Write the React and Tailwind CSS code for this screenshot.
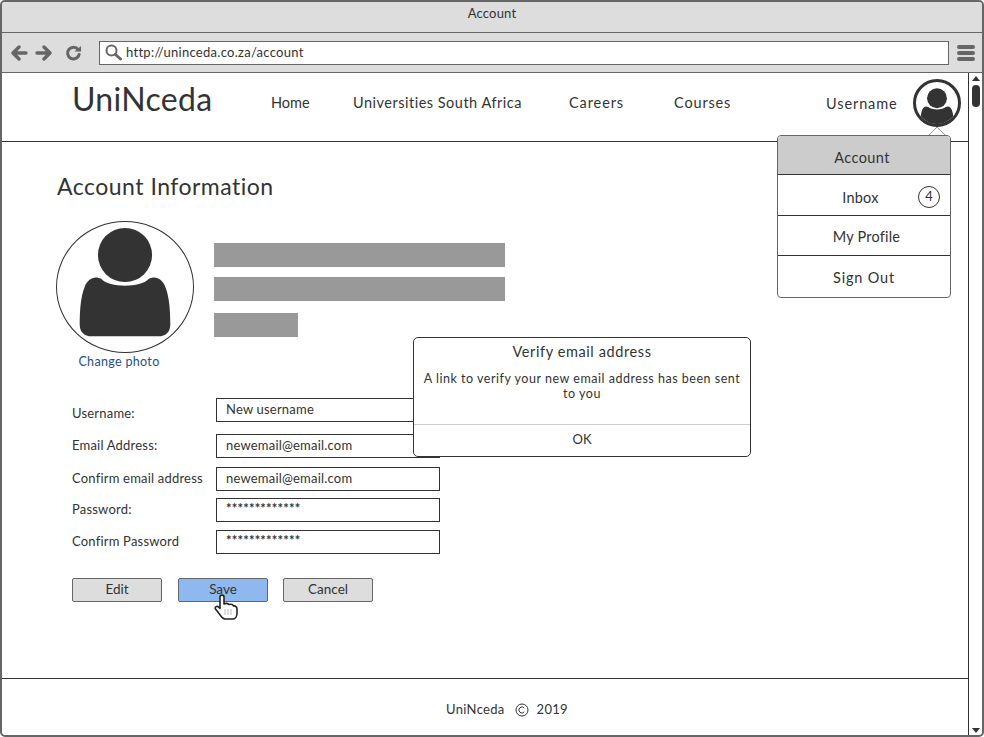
function Person({ className }) {
  return (
    <svg viewBox="0 0 138 132" className={className}>
      <circle cx="69" cy="33.5" r="27.5" fill="#333" />
      <path d="M45 58 C53 67 85 67 93 58 C100 54 107 58 110 66 C114 76 115 90 115 104 C115 112 110 116 103 116 L35 116 C28 116 23 112 23 104 C23 90 24 76 28 66 C31 58 38 54 45 58 Z" fill="#333" />
    </svg>
  );
}
function Field({ label, value, mt = "", labelClass = "", valueClass = "" }) {
  return (
    <div className={`flex ${mt}`}>
      <div className={`w-[144px] h-[24px] text-[13px] leading-[22px] tracking-[0.2px] ${labelClass}`}>{label}</div>
      <div className={`w-[224px] h-[24px] border border-[#333] pl-[9px] text-[13px] tracking-[0.2px] bg-white ${valueClass}`}>{value}</div>
    </div>
  );
}
function Btn({ children, className }) {
  return (
    <div className={`w-[90px] h-[24px] pb-[2px] border border-[#666] rounded-[2px] flex items-center justify-center text-[13.5px] ${className}`}>{children}</div>
  );
}
function MenuRow({ children, className }) {
  return <div className={`flex items-center justify-center text-[14.5px] tracking-[0.2px] border-b border-[#333] ${className}`}>{children}</div>;
}
export default function App() {
  return (
    <div className="relative w-[984px] h-[737px] border-2 border-[#666] rounded-[5px] bg-white text-[#333] flex flex-col overflow-hidden font-['Lato','Liberation_Sans',sans-serif]">
      <div className="h-[30px] pb-[6px] bg-[#ddd] flex items-center justify-center text-[13px] tracking-[0.2px] shrink-0">Account</div>
      <div className="h-[38px] pt-[1px] bg-[#ddd] border-y border-[#666] flex items-center shrink-0 box-content">
        <svg viewBox="0 0 18 16" className="w-[18px] h-[16px] ml-[8px]"><path d="M9 2 L3 8 L9 14 M3 8 H16" fill="none" stroke="#666" strokeWidth="3.4" strokeLinecap="round" strokeLinejoin="round" /></svg>
        <svg viewBox="0 0 18 16" className="w-[18px] h-[16px] ml-[7px]"><path d="M9 2 L15 8 L9 14 M15 8 H2" fill="none" stroke="#666" strokeWidth="3.4" strokeLinecap="round" strokeLinejoin="round" /></svg>
        <svg viewBox="0 0 18 18" className="w-[17px] h-[17px] ml-[12px]"><path d="M14 5 A 6.2 6.2 0 1 0 15 10" fill="none" stroke="#666" strokeWidth="3.2" strokeLinecap="round" /><path d="M10 7 L17 7 L17 1 Z" fill="#666" /></svg>
        <div className="ml-[17px] w-[850px] h-[24px] bg-white border border-[#666] flex items-center pl-[5px] text-[13px] tracking-[0.28px]">
          <svg viewBox="0 0 17 17" className="w-[17px] h-[17px] mr-[4px] -mt-[2px]"><circle cx="6.5" cy="6.5" r="5" fill="none" stroke="#666" strokeWidth="2" /><path d="M10.5 10.5 L15.5 15" stroke="#666" strokeWidth="3" strokeLinecap="round" /></svg>
          http://uninceda.co.za/account
        </div>
        <div className="ml-[8px] w-[18px] flex flex-col gap-[2px]">
          <div className="h-[4px] rounded-[2px] bg-[#666]" />
          <div className="h-[4px] rounded-[2px] bg-[#666]" />
          <div className="h-[4px] rounded-[2px] bg-[#666]" />
        </div>
      </div>
      <div className="flex-1 flex min-h-0">
        <div className="flex-1 flex flex-col min-w-0">
          <div className="h-[68px] border-b border-[#333] flex items-start shrink-0 box-content">
            <div className="ml-[70px] mt-[4px] w-[141px] text-[32px] leading-[44px] tracking-[0.3px]">UniNceda</div>
            <div className="ml-[58px] mt-[19px] w-[82px] text-[14.5px] leading-[22px]">Home</div>
            <div className="mt-[19px] w-[216px] text-[14.5px] leading-[22px] tracking-[0.5px] whitespace-nowrap">Universities South Africa</div>
            <div className="mt-[19px] w-[105px] text-[14.5px] leading-[22px] tracking-[0.9px]">Careers</div>
            <div className="mt-[19px] w-[152px] text-[14.5px] leading-[22px] tracking-[0.85px]">Courses</div>
            <div className="mt-[20px] w-[87px] text-[14.5px] leading-[22px] tracking-[0.9px]">Username</div>
            <div className="mt-[6px] w-[48px] h-[48px] rounded-full border-[3px] border-[#333] overflow-hidden flex items-start justify-center">
              <Person className="w-[50px] h-[48px] shrink-0 mt-[4px]" />
            </div>
          </div>
          <div className="flex-1 min-h-0 pl-[54px]">
            <div className="mt-[28px] pl-[1px] text-[23px] leading-[32px] tracking-[0.49px]">Account Information</div>
            <div className="flex mt-[19px]">
              <div className="w-[138px]">
                <div className="w-[138px] h-[132px] rounded-[50%] border border-[#333] overflow-hidden">
                  <Person className="w-[136px] h-[130px]" />
                </div>
                <div className="text-center pr-[12px] text-[12.5px] leading-[18px] tracking-[0.33px] text-[#1d4f91]">Change photo</div>
              </div>
              <div className="ml-[20px] mt-[22px]">
                <div className="w-[291px] h-[24px] bg-[#999]" />
                <div className="w-[291px] h-[24px] bg-[#999] mt-[10px]" />
                <div className="w-[84px] h-[24px] bg-[#999] mt-[12px]" />
              </div>
            </div>
            <div className="ml-[16px] mt-[27px]">
              <Field label="Username:" value="New username" labelClass="pt-[4px]" valueClass="pt-[1px]" />
              <Field label="Email Address:" value="newemail@email.com" mt="mt-[12px]" valueClass="pt-[1px]" />
              <Field label="Confirm email address" value="newemail@email.com" mt="mt-[9px]" valueClass="pt-[1px]" />
              <Field label="Password:" value="*************" mt="mt-[7px]" valueClass="font-bold" />
              <Field label="Confirm Password" value="*************" mt="mt-[8px]" valueClass="font-bold" />
              <div className="flex mt-[24px]">
                <Btn className="bg-[#ddd]">Edit</Btn>
                <Btn className="bg-[#8fb8ef] ml-[16px]">Save</Btn>
                <Btn className="bg-[#ddd] ml-[15px]">Cancel</Btn>
              </div>
            </div>
          </div>
          <div className="h-[50px] pt-[6px] pl-[44px] border-t border-[#333] shrink-0 flex items-center justify-center box-content text-[13px] tracking-[0.3px]">
            <span>UniNceda</span>
            <svg viewBox="0 0 14 14" className="w-[14px] h-[14px] ml-[10px]"><circle cx="7" cy="7" r="6" fill="none" stroke="#333" strokeWidth="1" /><path d="M9.3 5.2 A 3 3 0 1 0 9.3 8.8" fill="none" stroke="#333" strokeWidth="1" /></svg>
            <span className="ml-[8px]">2019</span>
          </div>
        </div>
        <div className="w-[13px] border-l border-[#333] flex flex-col items-center shrink-0 box-content pt-[3px] pb-[2px]">
          <div className="w-0 h-0 border-l-[4px] border-r-[4px] border-b-[5px] border-l-transparent border-r-transparent border-b-[#333]" />
          <div className="w-[8px] h-[22px] rounded-[4px] bg-[#333] mt-[4px]" />
          <div className="flex-1" />
          <div className="w-0 h-0 border-l-[4px] border-r-[4px] border-t-[5px] border-l-transparent border-r-transparent border-t-[#333]" />
        </div>
      </div>

      {/* caret + dropdown menu */}
      <svg viewBox="0 0 18 9" className="absolute left-[926px] top-[125px] w-[18px] h-[9px]"><path d="M0 9 L9 0 L18 9" fill="#fff" stroke="#999" strokeWidth="1" /></svg>
      <div className="absolute left-[775px] top-[133px] w-[174px] h-[163px] bg-white border border-[#666] rounded-[4px] overflow-hidden flex flex-col">
        <MenuRow className="h-[39px] bg-[#ccc] pr-[4px] pt-[5px] tracking-[0.4px]">Account</MenuRow>
        <MenuRow className="h-[41px] pr-[7px] pt-[5px] relative">
          Inbox
          <div className="absolute right-[10px] top-[11px] w-[22px] h-[22px] rounded-full border border-[#333] flex items-center justify-center text-[13px]">4</div>
        </MenuRow>
        <MenuRow className="h-[40px] pl-[5px] pt-[3px]">My Profile</MenuRow>
        <div className="flex-1 flex items-center justify-center text-[14.5px] tracking-[0.8px] pt-[3px]">Sign Out</div>
      </div>

      {/* dialog */}
      <div className="absolute left-[411px] top-[335px] w-[338px] h-[120px] bg-white border border-[#333] rounded-[5px] flex flex-col text-center">
        <div className="h-[28px] pt-[4px] text-[14.5px] leading-[20px] tracking-[0.6px]">Verify email address</div>
        <div className="h-[58px] px-[6px] pt-[5px] text-[12.5px] leading-[15px] tracking-[0.52px]">A link to verify your new email address has been sent to you</div>
        <div className="flex-1 border-t border-[#ccc] flex items-center justify-center text-[13px] pb-[2px]">OK</div>
      </div>

      {/* pointer */}
      <svg viewBox="0 0 24 26" className="absolute left-[212px] top-[592px] w-[24px] h-[26px]">
        <path d="M6 3 C6 0.5 10 0.5 10 3 L10 10 C12 9 14 9.5 15 10.5 C17 10 19 10.5 19.5 12 C21.5 11.5 23 13 23 15 L23 19 C23 22 21.5 25 19 25 L11 25 C8 25 7 22 5 19.5 L1.5 15 C0.5 13 3 11.5 4.5 13 L6 14.5 Z" fill="#fff" stroke="#222" strokeWidth="1.6" strokeLinejoin="round" />
        <path d="M11 15 V21 M14 15 V21 M17 15 V21" stroke="#bbb" strokeWidth="1" />
      </svg>
    </div>
  );
}
